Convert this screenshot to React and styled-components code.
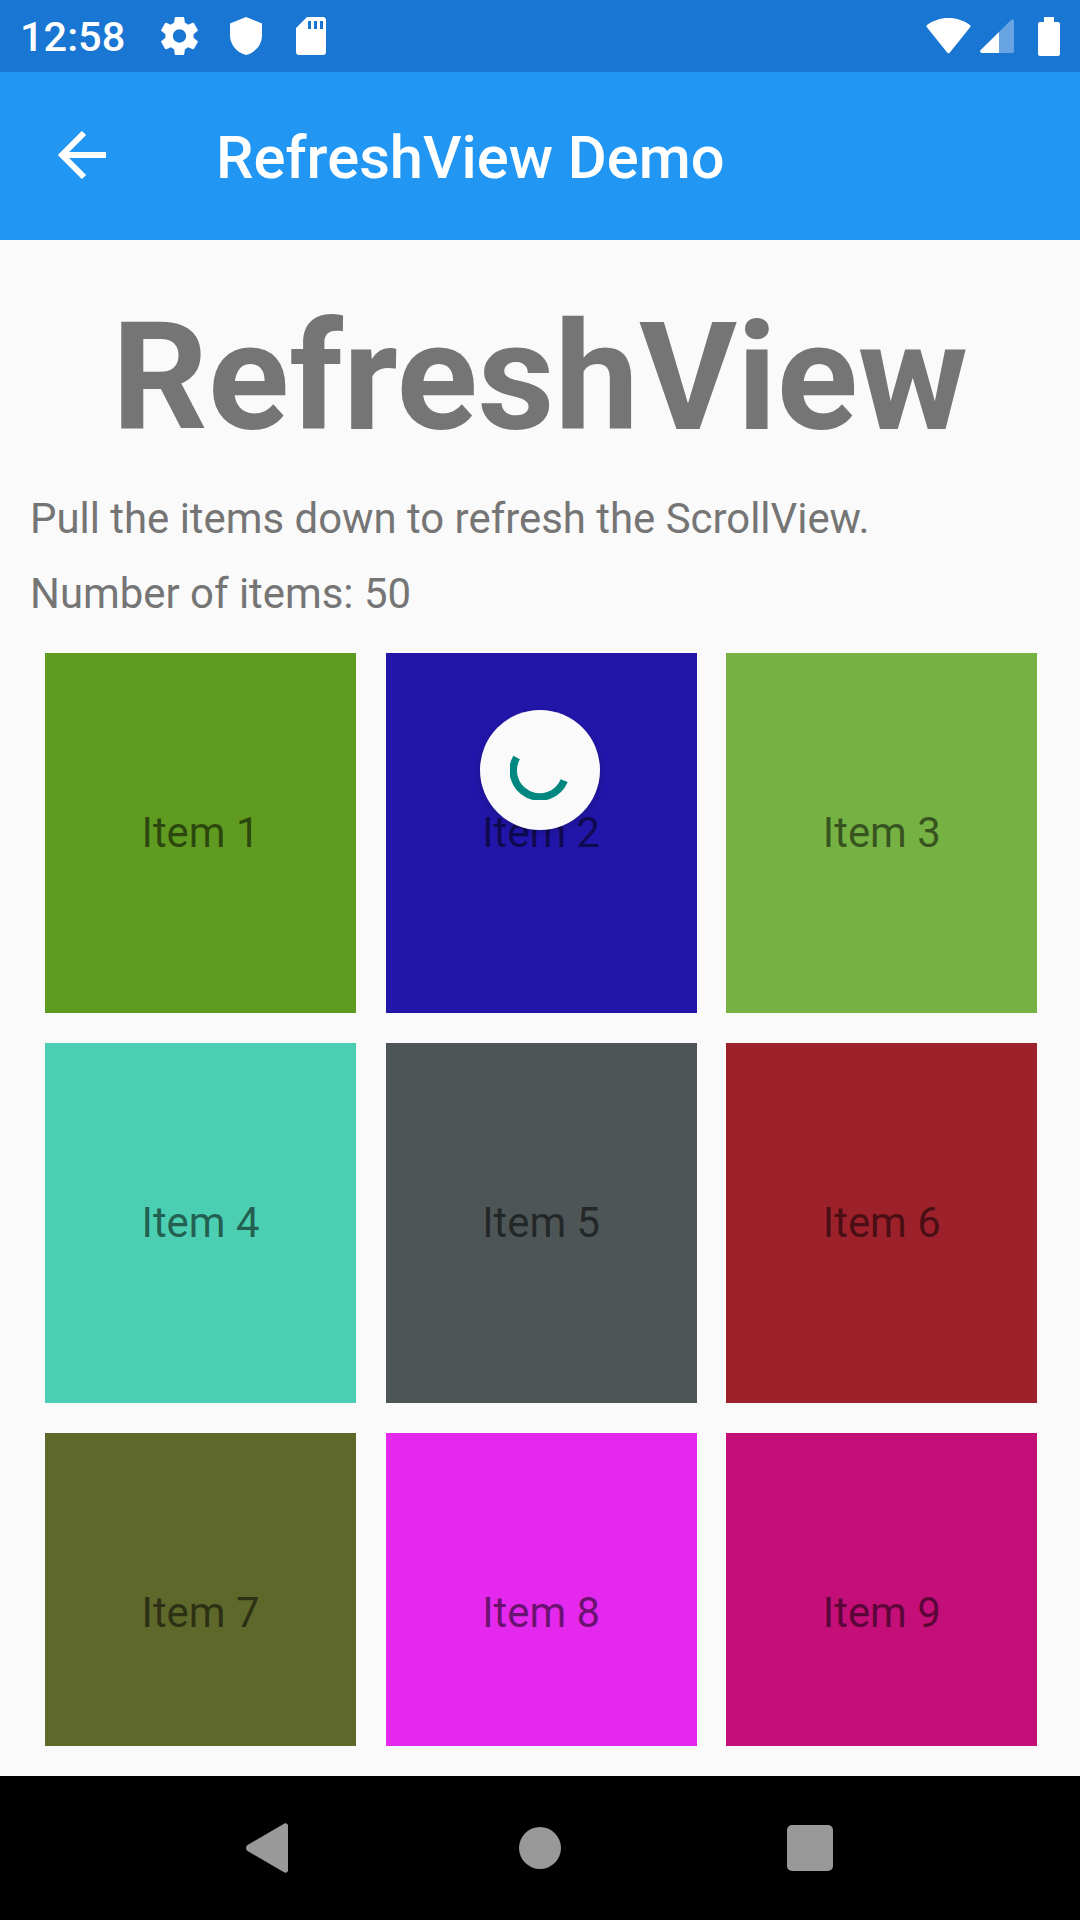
import styled, { createGlobalStyle } from "styled-components";

const items = [
  { name: "Item 1", color: "#5F9B20" },
  { name: "Item 2", color: "#2216AA" },
  { name: "Item 3", color: "#76B243" },
  { name: "Item 4", color: "#4BCEB1" },
  { name: "Item 5", color: "#4D5557" },
  { name: "Item 6", color: "#9C212B" },
  { name: "Item 7", color: "#5F682B" },
  { name: "Item 8", color: "#E428EE" },
  { name: "Item 9", color: "#C40E78" },
];

function StatusIcons() {
  return (
    <StatusLeft>
      <Clock>12:58</Clock>
      <svg width="37" height="38" viewBox="2.2 2 19.6 20" preserveAspectRatio="none" fill="#fff">
        <path d="M19.43 12.98c.04-.32.07-.64.07-.98s-.03-.66-.07-.98l2.11-1.65c.19-.15.24-.42.12-.64l-2-3.46c-.12-.22-.39-.3-.61-.22l-2.49 1c-.52-.4-1.08-.73-1.69-.98l-.38-2.65C14.46 2.18 14.25 2 14 2h-4c-.25 0-.46.18-.49.42l-.38 2.65c-.61.25-1.17.59-1.69.98l-2.49-1c-.23-.09-.49 0-.61.22l-2 3.46c-.13.22-.07.49.12.64l2.11 1.65c-.04.32-.07.65-.07.98s.03.66.07.98l-2.11 1.65c-.19.15-.24.42-.12.64l2 3.46c.12.22.39.3.61.22l2.49-1c.52.4 1.08.73 1.69.98l.38 2.65c.03.24.24.42.49.42h4c.25 0 .46-.18.49-.42l.38-2.65c.61-.25 1.17-.59 1.69-.98l2.49 1c.23.09.49 0 .61-.22l2-3.46c.12-.22.07-.49-.12-.64l-2.110-1.650zM12 15.500c-1.930 0-3.500-1.570-3.500-3.500s1.570-3.500 3.500-3.500 3.500 1.570 3.500 3.500-1.570 3.500-3.500 3.500z" />
      </svg>
      <svg width="32" height="38" viewBox="0 0 31 38" preserveAspectRatio="none" fill="#fff">
        <path d="M15.500 0 31 6.500V18c0 10-6.600 17.500-15.500 20C6.600 35.500 0 28 0 18V6.500z" />
      </svg>
      <SdCard width="30" height="38" viewBox="0 0 30 38" fill="#fff">
        <path fillRule="evenodd" d="M11 0h16c1.700 0 3 1.300 3 3v32c0 1.700-1.300 3-3 3H3c-1.700 0-3-1.300-3-3V11zM12 4v8h3V4zM18 4v8h3V4zM24 4v8h3V4z" />
      </SdCard>
    </StatusLeft>
  );
}

function SystemIcons() {
  return (
    <StatusRight>
      <svg width="45" height="36" viewBox="0 0 46 38" preserveAspectRatio="none" fill="#fff">
        <path d="M23 0c8.500 0 16 2.800 22 7.500.6.500.7 1.300.3 1.900L24.200 36.600c-.6.800-1.800.8-2.400 0L.7 9.400C.3 8.800.4 8 1 7.500 7 2.800 14.500 0 23 0z" />
      </svg>
      <svg width="34" height="34" viewBox="0 0 34 34">
        <path fill="#fff" fillOpacity="0.34" d="M19 13 31 1c1-1 3-.5 3 1.200V32c0 1-.8 2-2 2H19z" />
        <path fill="#fff" d="M19 13v21H2c-1.600 0-2.500-1.800-1.300-3z" />
      </svg>
      <Battery width="22" height="39" viewBox="0 0 22 39" fill="#fff">
        <path d="M6 0h10v5h4c1.100 0 2 .9 2 2v30c0 1.100-.9 2-2 2H2c-1.100 0-2-.9-2-2V7c0-1.100.9-2 2-2h4z" />
      </Battery>
    </StatusRight>
  );
}

export default function App() {
  return (
    <Screen>
      <GlobalStyle />
      <StatusBar>
        <StatusIcons />
        <SystemIcons />
      </StatusBar>
      <AppBar>
        <BackIcon width="52" height="48" viewBox="0 0 52 48" fill="none" stroke="#fff" strokeWidth="6">
          <path d="M51 24H9M29 2 7 24l22 22" />
        </BackIcon>
        <AppTitle>RefreshView Demo</AppTitle>
      </AppBar>
      <Content>
        <Heading>RefreshView</Heading>
        <Description>Pull the items down to refresh the ScrollView.</Description>
        <Description>Number of items: 50</Description>
        <Grid>
          {items.map((item, i) => (
            <Tile key={item.name} $color={item.color} $cut={i > 5}>
              <TileLabel>{item.name}</TileLabel>
            </Tile>
          ))}
        </Grid>
        <Spinner>
          <svg width="60" height="60" viewBox="0 0 60 60" fill="none">
            <path d="M6.600 17.500A26.500 26.500 0 1 0 54.200 40.600" stroke="#008780" strokeWidth="7.500" />
          </svg>
        </Spinner>
      </Content>
      <NavBar>
        <NavBack width="44" height="50" viewBox="0 0 44 50" fill="#999">
          <path d="M1.500 22 38 .7c2-1 4 0 4 2v44.600c0 2-2 3-4 2L1.500 28c-2-1.500-2-4.500 0-6z" />
        </NavBack>
        <svg width="42" height="42" viewBox="0 0 42 42" fill="#999">
          <circle cx="21" cy="21" r="21" />
        </svg>
        <svg width="46" height="46" viewBox="0 0 46 46" fill="#999">
          <rect width="46" height="46" rx="5" />
        </svg>
      </NavBar>
    </Screen>
  );
}

const GlobalStyle = createGlobalStyle`
  * {
    box-sizing: border-box;
  }

  body {
    margin: 0;
    font-family: Roboto, "Liberation Sans", sans-serif;
    background: #fafafa;
  }
`
const Screen = styled.div`
  display: flex;
  flex-direction: column;
  width: 1080px;
  height: 1920px;
  overflow: hidden;
`
const StatusBar = styled.div`
  display: flex;
  align-items: center;
  justify-content: space-between;
  flex: none;
  height: 72px;
  padding: 0 20px;
  background: #1976d2;
`
const StatusLeft = styled.div`
  display: flex;
  align-items: center;
  gap: 32px;
`
const StatusRight = styled.div`
  display: flex;
  align-items: center;
  gap: 9px;
`
const SdCard = styled.svg`
  margin-left: 2px;
`
const Battery = styled.svg`
  margin-left: 15px;
`
const Clock = styled.span`
  font-size: 41.5px;
  font-weight: 500;
  color: #fff;
  margin-right: 4px;
`
const AppBar = styled.div`
  display: flex;
  align-items: center;
  flex: none;
  height: 168px;
  padding-left: 55px;
  background: #2196f3;
`
const BackIcon = styled.svg`
  flex: none;
  margin-bottom: 2px;
`
const AppTitle = styled.h1`
  margin: 4px 0 0 109px;
  font-size: 59.7px;
  font-weight: 500;
  color: #fff;
`
const Content = styled.div`
  position: relative;
  flex: 1;
  padding-top: 58px;
  background: #fafafa;
  overflow: hidden;
`
const Heading = styled.h2`
  margin: 0 0 38px;
  font-size: 150.2px;
  line-height: 160px;
  font-weight: 700;
  text-align: center;
  color: #757575;
`
const Description = styled.p`
  margin: 0 0 30px 30px;
  font-size: 41.9px;
  line-height: 45px;
  color: #757575;
`
const Grid = styled.div`
  display: grid;
  grid-template-columns: repeat(3, 311px);
  gap: 30px 29.67px;
  margin-top: 37px;
  padding-left: 45px;
`
const Tile = styled.div`
  height: ${(props) => (props.$cut ? "313px" : "360px")};
  background: ${(props) => props.$color};
  overflow: hidden;
`
const TileLabel = styled.div`
  height: 360px;
  line-height: 360px;
  text-align: center;
  font-size: 41.9px;
  color: rgba(0, 0, 0, 0.54);
`
const Spinner = styled.div`
  position: absolute;
  top: 470px;
  left: 480px;
  display: flex;
  align-items: center;
  justify-content: center;
  width: 120px;
  height: 120px;
  border-radius: 50%;
  background: #fafafa;
  box-shadow: 0 3px 8px rgba(0, 0, 0, 0.2);
`
const NavBar = styled.div`
  display: flex;
  align-items: center;
  justify-content: space-between;
  flex: none;
  height: 144px;
  padding: 0 247px 0 246px;
  background: #000;
`
const NavBack = styled.svg`
  margin-right: 3px;
`
